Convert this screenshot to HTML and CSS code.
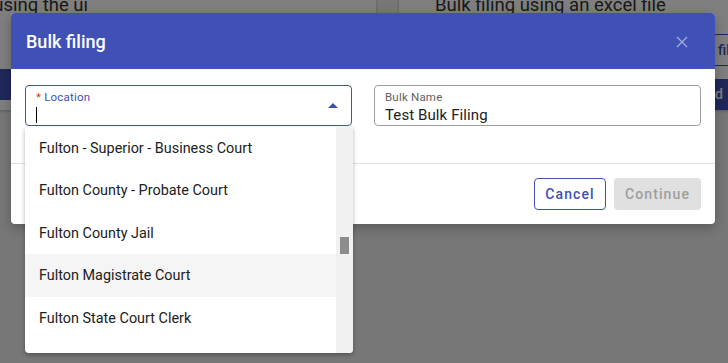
FILE: index.html
```html
<!DOCTYPE html>
<html>
<head>
<meta charset="utf-8">
<link rel="stylesheet" href="styles.css">
</head>
<body>
<div class="page">
  <div class="card card-left">
    <div class="card-title">Bulk filing using the ui</div>
    <div class="card-actions">
      <div class="btn-filled wide">Start bulk filing</div>
    </div>
  </div>
  <div class="card card-right">
    <div class="card-title">Bulk filing using an excel file</div>
    <div class="card-actions">
      <div class="btn-outline">file template</div>
      <div class="btn-filled">Upload</div>
    </div>
  </div>
</div>

<div class="overlay"></div>

<div class="dialog">
  <div class="dialog-header">
    <span class="dialog-title">Bulk filing</span>
    <svg class="close" width="12" height="12" viewBox="0 0 12 12"><path d="M1 1L11 11M11 1L1 11" stroke="currentColor" stroke-width="1.3" fill="none"/></svg>
  </div>
  <div class="dialog-body">
    <div class="field active">
      <div class="field-label"><span class="req">*</span> Location</div>
      <div class="field-input"><span class="caret"></span></div>
      <svg class="arrow" width="10" height="5" viewBox="0 0 10 5"><path d="M0 5L5 0L10 5Z" fill="currentColor"/></svg>
    </div>
    <div class="field">
      <div class="field-label">Bulk Name</div>
      <div class="field-input">Test Bulk Filing</div>
    </div>
  </div>
  <div class="dialog-footer">
    <div class="btn cancel">Cancel</div>
    <div class="btn continue">Continue</div>
  </div>
</div>

<div class="dropdown">
  <div class="options">
    <div class="option">Fulton - Superior - Business Court</div>
    <div class="option">Fulton County - Probate Court</div>
    <div class="option">Fulton County Jail</div>
    <div class="option hover">Fulton Magistrate Court</div>
    <div class="option">Fulton State Court Clerk</div>
  </div>
  <div class="scrollbar"><div class="thumb"></div></div>
</div>
</body>
</html>
```

FILE: styles.css
```css
* { box-sizing: border-box; }
html, body { margin: 0; padding: 0; }
body {
  width: 728px;
  height: 363px;
  overflow: hidden;
  background: #efefef;
  font-family: Roboto, "Liberation Sans", sans-serif;
  position: relative;
}
.page {
  display: flex;
  gap: 23px;
  margin-left: -134px;
  margin-top: -10px;
}
.card {
  background: #fff;
  width: 510px;
  height: 120px;
  flex: none;
  box-shadow: 0 1px 3px rgba(0,0,0,.25);
}
.card-title {
  font-size: 18.5px;
  color: #333;
  line-height: 24px;
  padding-top: 3px;
  white-space: nowrap;
}
.card-left .card-title { text-align: right; padding-right: 288px; }
.card-right .card-title { text-align: left; padding-left: 36px; }
.card-actions { position: relative; height: 90px; }
.btn-filled {
  background: #3f51b5;
  color: #fff;
  font-weight: 500;
  font-size: 14px;
  height: 31px;
  line-height: 31px;
  padding: 0 10px;
  white-space: nowrap;
}
.card-left .btn-filled { position: absolute; left: 0; right: 140px; top: 52px; }
.btn-outline {
  position: absolute; left: 310px; top: 17px; height: 32px; width: 160px;
  border: 1px solid #3f51b5; color: #3f51b5; font-weight: 500; font-size: 14px;
  line-height: 30px; padding-left: 8px; white-space: nowrap;
}
.card-right .btn-filled { position: absolute; left: 270px; top: 62px; width: 200px; padding-left: 10px; }

.overlay {
  position: absolute; inset: 0;
  background: rgba(0,0,0,.5);
}
.dialog {
  position: absolute;
  left: 11px; top: 13px;
  width: 704px;
  background: #fff;
  border-radius: 4px;
  overflow: hidden;
  box-shadow: 0 4px 12px rgba(0,0,0,.25);
}
.dialog-header {
  height: 56px;
  background: #3f51b5;
  display: flex;
  align-items: center;
  justify-content: space-between;
  padding: 0 27px 0 15px;
}
.dialog-title {
  color: #fff;
  font-size: 18px;
  font-weight: 500;
  margin-top: 1px;
}
.close { color: #a3acdc; margin-top: 1px; }
.dialog-body {
  display: flex;
  gap: 22px;
  padding: 16px 14px 37px;
  border-bottom: 1px solid #e0e0e0;
}
.field {
  position: relative;
  flex: 1;
  height: 41px;
  border: 1px solid #9e9e9e;
  border-radius: 4px;
  padding: 4px 10px 0;
}
.field.active { border-color: #3f51b5; }
.field-label {
  font-size: 11.5px;
  color: #616161;
  line-height: 14px;
  letter-spacing: .2px;
}
.field.active .field-label { color: #3f51b5; }
.req { color: #d32f2f; }
.field-input {
  font-size: 15px;
  color: #212121;
  line-height: 19px;
  letter-spacing: .1px;
  height: 19px;
  margin-top: 2px;
}
.caret {
  display: inline-block;
  width: 1px;
  height: 16px;
  background: #000;
  vertical-align: -3px;
}
.arrow {
  position: absolute;
  right: 13px;
  top: 17px;
  color: #3f51b5;
}
.dialog-footer {
  display: flex;
  justify-content: flex-end;
  gap: 8px;
  padding: 14px 14px 14px;
}
.btn {
  height: 32px;
  line-height: 30px;
  border-radius: 4px;
  font-size: 14px;
  font-weight: 500;
  letter-spacing: 1.1px;
  text-align: center;
}
.cancel {
  width: 72px;
  border: 1px solid #3f51b5;
  color: #3f51b5;
}
.continue {
  width: 87px;
  background: #e0e0e0;
  color: #9e9e9e;
  line-height: 32px;
}
.dropdown {
  position: absolute;
  left: 25px; top: 127px;
  width: 328px; height: 226px;
  background: #fff;
  border-radius: 0 0 4px 4px;
  box-shadow: 0 2px 4px rgba(0,0,0,.3);
  display: flex;
  overflow: hidden;
}
.options { flex: 1; }
.option {
  height: 42.4px;
  line-height: 44.4px;
  padding-left: 14px;
  font-size: 14.4px;
  color: #212121;
}
.option.hover { background: #f5f5f5; }
.scrollbar {
  width: 17px;
  background: #f1f1f1;
  position: relative;
}
.thumb {
  position: absolute;
  left: 4px; width: 9px;
  top: 110px; height: 17px;
  background: #8c8c8c;
}
```
